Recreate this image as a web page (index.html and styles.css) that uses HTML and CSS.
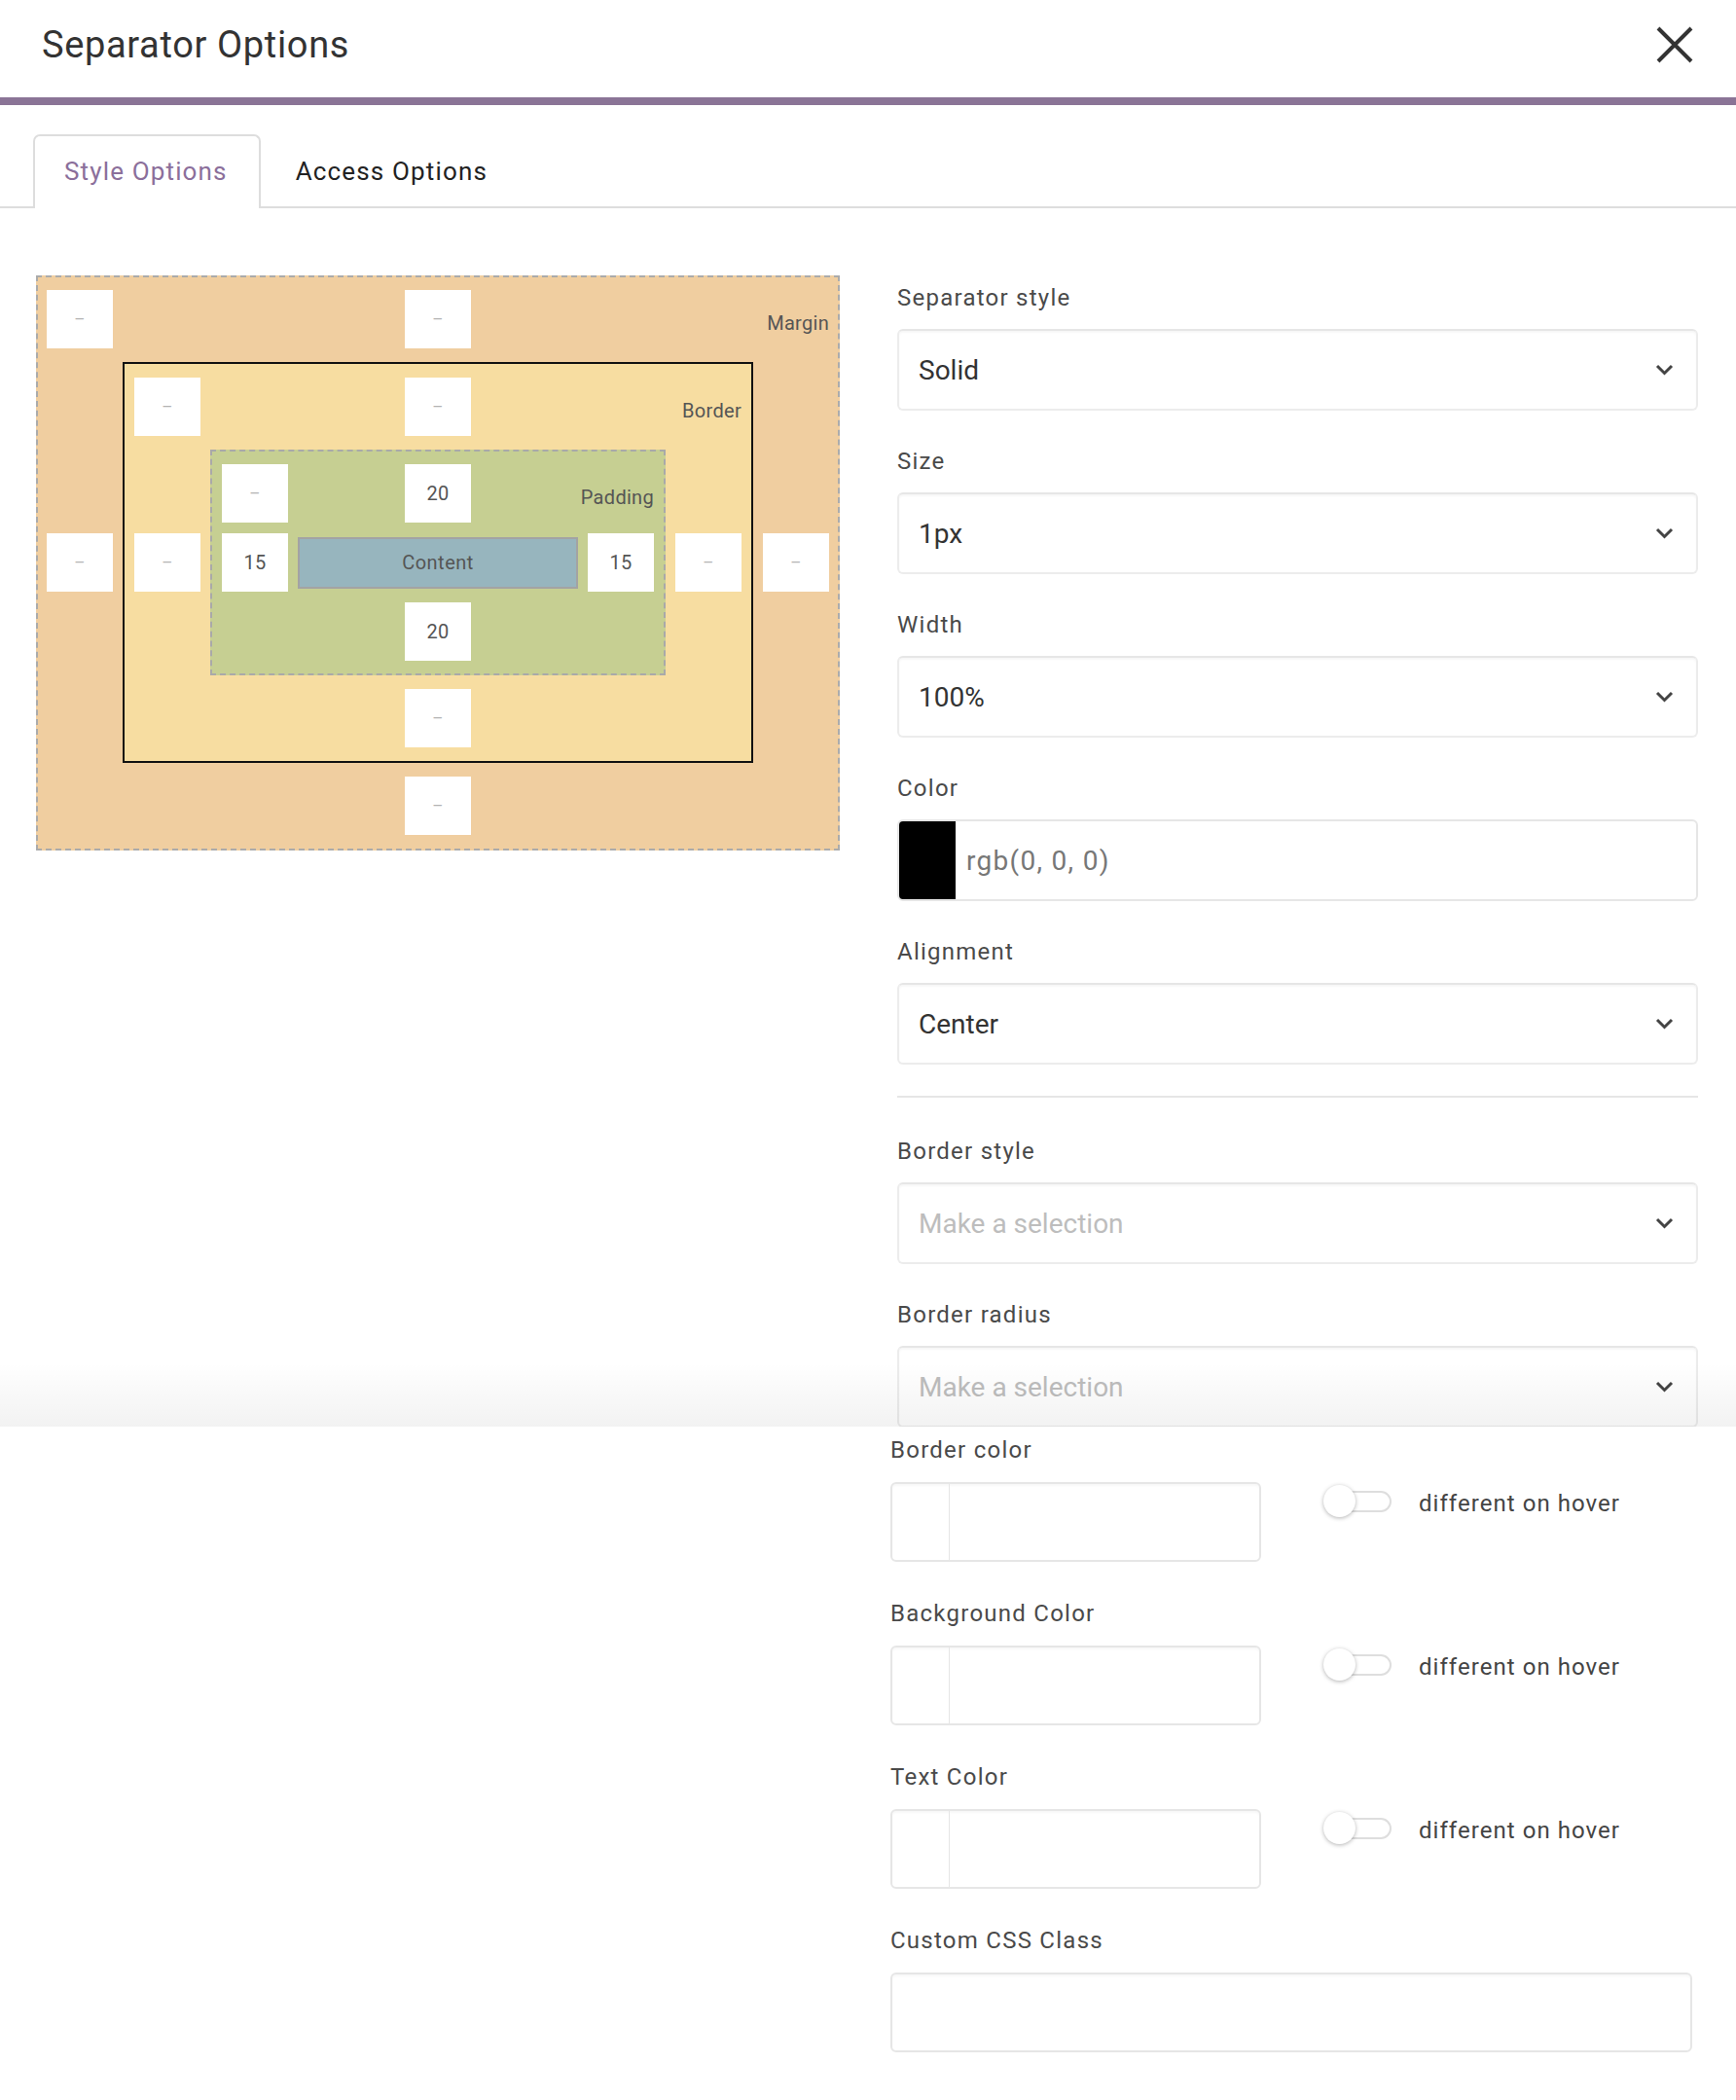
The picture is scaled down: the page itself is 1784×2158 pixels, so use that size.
FILE: index.html
```html
<!DOCTYPE html>
<html lang="en">
<head>
<meta charset="utf-8">
<title>Separator Options</title>
<link rel="stylesheet" href="styles.css">
</head>
<body>
<div class="modal">
  <header class="modal-header">
    <h1 class="modal-title">Separator Options</h1>
    <button class="close-btn" aria-label="Close">
      <svg width="40" height="40" viewBox="0 0 40 40"><path d="M3 3 L37 37 M37 3 L3 37" stroke="#333" stroke-width="4" fill="none"/></svg>
    </button>
  </header>
  <div class="accent-bar"></div>
  <nav class="tabs">
    <div class="tab tab-active">Style Options</div>
    <div class="tab">Access Options</div>
  </nav>

  <section class="upper">
    <div class="layer layer-margin">
      <div class="box corner dash">–</div>
      <div class="box top dash">–</div>
      <div class="layer-label">Margin</div>
      <div class="box side left dash">–</div>
      <div class="layer layer-border">
        <div class="box corner dash">–</div>
        <div class="box top dash">–</div>
        <div class="layer-label">Border</div>
        <div class="box side left dash">–</div>
        <div class="layer layer-padding">
          <div class="box corner dash">–</div>
          <div class="box top">20</div>
          <div class="layer-label">Padding</div>
          <div class="box side left">15</div>
          <div class="content-box">Content</div>
          <div class="box side right">15</div>
          <div class="box bottom">20</div>
        </div>
        <div class="box side right dash">–</div>
        <div class="box bottom dash">–</div>
      </div>
      <div class="box side right dash">–</div>
      <div class="box bottom dash">–</div>
    </div>

    <div class="form-col">
      <div class="field">
        <label class="field-label">Separator style</label>
        <div class="select"><span>Solid</span><svg class="chev" width="19" height="12" viewBox="0 0 19 12"><path d="M2 2 L9.5 9.5 L17 2" stroke="#444" stroke-width="3" fill="none"/></svg></div>
      </div>
      <div class="field">
        <label class="field-label">Size</label>
        <div class="select"><span>1px</span><svg class="chev" width="19" height="12" viewBox="0 0 19 12"><path d="M2 2 L9.5 9.5 L17 2" stroke="#444" stroke-width="3" fill="none"/></svg></div>
      </div>
      <div class="field">
        <label class="field-label">Width</label>
        <div class="select"><span>100%</span><svg class="chev" width="19" height="12" viewBox="0 0 19 12"><path d="M2 2 L9.5 9.5 L17 2" stroke="#444" stroke-width="3" fill="none"/></svg></div>
      </div>
      <div class="field">
        <label class="field-label">Color</label>
        <div class="color-input"><span class="swatch-black"></span><span class="color-text">rgb(0, 0, 0)</span></div>
      </div>
      <div class="field field-last">
        <label class="field-label">Alignment</label>
        <div class="select"><span>Center</span><svg class="chev" width="19" height="12" viewBox="0 0 19 12"><path d="M2 2 L9.5 9.5 L17 2" stroke="#444" stroke-width="3" fill="none"/></svg></div>
      </div>
      <hr class="divider">
      <div class="field">
        <label class="field-label">Border style</label>
        <div class="select"><span class="placeholder">Make a selection</span><svg class="chev" width="19" height="12" viewBox="0 0 19 12"><path d="M2 2 L9.5 9.5 L17 2" stroke="#444" stroke-width="3" fill="none"/></svg></div>
      </div>
      <div class="field">
        <label class="field-label">Border radius</label>
        <div class="select"><span class="placeholder">Make a selection</span><svg class="chev" width="19" height="12" viewBox="0 0 19 12"><path d="M2 2 L9.5 9.5 L17 2" stroke="#444" stroke-width="3" fill="none"/></svg></div>
      </div>
    </div>
  </section>

  <section class="lower">
    <div class="lfield">
      <label class="field-label">Border color</label>
      <div class="color-row">
        <div class="color-box"><span class="swatch-empty"></span></div>
        <div class="hover-toggle"><span class="toggle"><span class="toggle-track"></span><span class="toggle-knob"></span></span><span class="hover-text">different on hover</span></div>
      </div>
    </div>
    <div class="lfield">
      <label class="field-label">Background Color</label>
      <div class="color-row">
        <div class="color-box"><span class="swatch-empty"></span></div>
        <div class="hover-toggle"><span class="toggle"><span class="toggle-track"></span><span class="toggle-knob"></span></span><span class="hover-text">different on hover</span></div>
      </div>
    </div>
    <div class="lfield">
      <label class="field-label">Text Color</label>
      <div class="color-row">
        <div class="color-box"><span class="swatch-empty"></span></div>
        <div class="hover-toggle"><span class="toggle"><span class="toggle-track"></span><span class="toggle-knob"></span></span><span class="hover-text">different on hover</span></div>
      </div>
    </div>
    <div class="lfield">
      <label class="field-label">Custom CSS Class</label>
      <div class="text-input"></div>
    </div>
  </section>
</div>
</body>
</html>
```

FILE: styles.css
```css
* { box-sizing: border-box; }
html, body { margin: 0; padding: 0; background: #fff; }
body { font-family: Roboto, "Noto Sans", "Liberation Sans", sans-serif; color: #333; }

.modal { width: 1784px; }

.modal-header {
  height: 100px;
  display: flex;
  align-items: center;
  justify-content: space-between;
  padding: 0 43px 8px 43px;
}
.modal-title {
  margin: 0;
  font-size: 38px;
  font-weight: 400;
  letter-spacing: 0.65px;
  color: #333;
}
.close-btn {
  border: 0;
  background: none;
  padding: 0;
  width: 40px;
  height: 40px;
  display: flex;
}
.accent-bar { height: 8px; background: #8a7496; }

.tabs {
  display: flex;
  padding: 30px 0 0 34px;
  border-bottom: 2px solid #dddddd;
}
.tab {
  font-size: 26px;
  line-height: 30px;
  letter-spacing: 1.15px;
  color: #222;
  padding: 21px 32px 21px 34px;
  border: 2px solid transparent;
  border-bottom: 0;
  margin-bottom: -2px;
}
.tab-active {
  color: #8b6f9b;
  border-color: #dddddd;
  border-radius: 7px 7px 0 0;
  background: #fff;
  padding: 21px 32px 23px 30px;
}

/* upper area */
.upper {
  position: relative;
  height: 1252px;
  overflow: hidden;
  display: grid;
  grid-template-columns: 826px 823px;
  column-gap: 59px;
  align-items: start;
  padding: 69px 39px 0 37px;
}
.upper::after {
  content: "";
  position: absolute;
  left: 0; right: 0; bottom: 0;
  height: 66px;
  background: linear-gradient(to bottom, rgba(0,0,0,0), rgba(0,0,0,0.05));
  pointer-events: none;
}

/* box model */
.layer {
  display: grid;
  grid-template-columns: 68px 1fr 68px;
  grid-template-rows: 60px auto 60px;
  column-gap: 10px;
  row-gap: 14px;
}
.layer-margin {
  background: #f0cea0;
  border: 2px dashed #ababab;
  padding: 13px 9px 14px 9px;
}
.layer-border {
  background: #f7dda1;
  border: 2px solid #111;
  padding: 14px 10px;
  grid-column: 2;
  grid-row: 2;
}
.layer-padding {
  background: #c6cf92;
  border: 2px dashed #a9a9a9;
  padding: 13px 10px;
  row-gap: 11px;
  grid-column: 2;
  grid-row: 2;
}
.box {
  width: 68px;
  height: 60px;
  background: #fff;
  display: flex;
  align-items: center;
  justify-content: center;
  font-size: 20px;
  letter-spacing: 0.3px;
  color: #555;
}
.box.dash { color: #b3b3b3; font-size: 17px; }
.box.corner { grid-column: 1; grid-row: 1; }
.box.top { grid-column: 2; grid-row: 1; justify-self: center; }
.box.side { grid-row: 2; align-self: center; }
.box.left { grid-column: 1; }
.box.right { grid-column: 3; }
.box.bottom { grid-column: 2; grid-row: 3; justify-self: center; }
.layer-label {
  grid-column: 3;
  grid-row: 1;
  display: flex;
  justify-content: flex-end;
  align-items: center;
  white-space: nowrap;
  font-size: 20px;
  letter-spacing: 0.3px;
  color: #555;
  padding-top: 8px;
}
.content-box {
  grid-column: 2;
  grid-row: 2;
  align-self: center;
  height: 53px;
  background: #97b5be;
  border: 2px solid #a3a3a3;
  display: flex;
  align-items: center;
  justify-content: center;
  font-size: 20px;
  letter-spacing: 0.5px;
  color: #555;
}

/* form */
.form-col { padding-top: 9px; }
.field { margin-bottom: 38px; }
.field-last { margin-bottom: 0; }
.field-label {
  display: block;
  font-size: 24px;
  line-height: 28px;
  letter-spacing: 1.25px;
  color: #4a4a4a;
  margin-bottom: 18px;
}
.select {
  height: 84px;
  display: flex;
  align-items: center;
  justify-content: space-between;
  padding: 0 23px 0 20px;
  border: 2px solid #ececec;
  border-top-color: #e6e6e6;
  border-radius: 6px;
  box-shadow: inset 0 2px 2px rgba(0,0,0,0.035);
  font-size: 28px;
  color: #333;
  background: #fff;
}
.placeholder { color: #bdbdbd; }
.chev { flex: none; }
.color-input {
  height: 84px;
  display: flex;
  align-items: center;
  border: 2px solid #e6e6e6;
  border-radius: 6px;
  overflow: hidden;
}
.swatch-black {
  align-self: stretch;
  width: 58px;
  background: #000;
}
.color-text {
  padding-left: 11px;
  font-size: 28px;
  letter-spacing: 1.3px;
  color: #777;
}
.divider {
  margin: 32px 0 41px 0;
  border: 0;
  height: 2px;
  background: #e6e6e6;
}

/* lower area */
.lower { padding: 10px 45px 49px 915px; }
.lfield { margin-bottom: 39px; }
.lfield .field-label { margin-bottom: 19px; }
.color-row { display: flex; align-items: flex-start; }
.color-box {
  width: 381px;
  height: 82px;
  border: 2px solid #e6e6e6;
  border-radius: 6px;
  display: flex;
  box-shadow: inset 0 2px 2px rgba(0,0,0,0.03);
}
.swatch-empty {
  width: 59px;
  border-right: 1px solid #e6e6e6;
}
.hover-toggle {
  margin-left: 64px;
  margin-top: 3px;
  display: flex;
  align-items: flex-start;
  gap: 28px;
}
.toggle {
  position: relative;
  width: 70px;
  height: 33px;
  display: block;
}
.toggle-track {
  position: absolute;
  left: 16px;
  top: 6px;
  width: 54px;
  height: 22px;
  border: 2px solid #dedede;
  border-radius: 11px;
  background: #fff;
}
.toggle-knob {
  position: absolute;
  left: 0;
  top: 0;
  width: 33px;
  height: 33px;
  border-radius: 50%;
  background: #fff;
  box-shadow: 0 1px 4px rgba(0,0,0,0.3);
}
.hover-text {
  font-size: 24px;
  line-height: 33px;
  letter-spacing: 1.05px;
  color: #444;
  padding-top: 3px;
}
.text-input {
  width: 824px;
  height: 82px;
  border: 2px solid #e6e6e6;
  border-radius: 6px;
  box-shadow: inset 0 2px 2px rgba(0,0,0,0.03);
}
```
